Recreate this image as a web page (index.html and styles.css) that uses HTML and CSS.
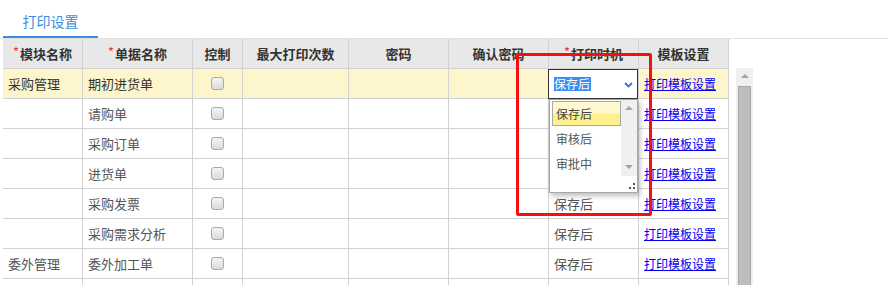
FILE: index.html
```html
<!DOCTYPE html>
<html lang="zh-CN">
<head>
  <meta charset="UTF-8" />
  <title>打印设置</title>
  <link rel="stylesheet" href="styles.css">
</head>
<body>

  <!-- Tabs -->
  <div class="tabs">
    <div class="tab active">打印设置</div>
  </div>

  <div class="content">
    <table class="grid">
      <colgroup>
        <col style="width:80px"><col style="width:110px"><col style="width:50px"><col style="width:106px">
        <col style="width:100px"><col style="width:100px"><col style="width:90px"><col style="width:90px">
      </colgroup>
      <thead>
        <tr>
          <th><span class="req">*</span>模块名称</th>
          <th><span class="req">*</span>单据名称</th>
          <th>控制</th>
          <th>最大打印次数</th>
          <th>密码</th>
          <th>确认密码</th>
          <th><span class="req">*</span>打印时机</th>
          <th>模板设置</th>
        </tr>
      </thead>
      <tbody>
        <tr class="current">
          <td>采购管理</td>
          <td>期初进货单</td>
          <td class="center"><span class="cb"></span></td>
          <td></td><td></td><td></td>
          <td class="editing">
            <div class="select">
              <span class="picked">保存后</span>
              <svg class="chevron" width="9" height="6" viewBox="0 0 9 6"><path d="M1 1 L4.5 4.5 L8 1" fill="none" stroke="#2a78d8" stroke-width="1.8"/></svg>
            </div>
            <div class="dropdown">
              <div class="drop-body">
                <ul class="options">
                  <li class="hover">保存后</li>
                  <li>审核后</li>
                  <li>审批中</li>
                </ul>
                <div class="mini-scroll">
                  <span class="arrow up"></span>
                  <span class="arrow down"></span>
                </div>
              </div>
              <div class="grip">
                <svg width="6" height="6" viewBox="0 0 6 6"><rect x="4" y="0" width="2" height="2" fill="#555"/><rect x="0" y="4" width="2" height="2" fill="#555"/><rect x="4" y="4" width="2" height="2" fill="#555"/></svg>
              </div>
            </div>
          </td>
          <td><a href="#">打印模板设置</a></td>
        </tr>
        <tr>
          <td></td><td>请购单</td><td class="center"><span class="cb"></span></td>
          <td></td><td></td><td></td><td>保存后</td><td><a href="#">打印模板设置</a></td>
        </tr>
        <tr>
          <td></td><td>采购订单</td><td class="center"><span class="cb"></span></td>
          <td></td><td></td><td></td><td>保存后</td><td><a href="#">打印模板设置</a></td>
        </tr>
        <tr>
          <td></td><td>进货单</td><td class="center"><span class="cb"></span></td>
          <td></td><td></td><td></td><td>保存后</td><td><a href="#">打印模板设置</a></td>
        </tr>
        <tr>
          <td></td><td>采购发票</td><td class="center"><span class="cb"></span></td>
          <td></td><td></td><td></td><td>保存后</td><td><a href="#">打印模板设置</a></td>
        </tr>
        <tr>
          <td></td><td>采购需求分析</td><td class="center"><span class="cb"></span></td>
          <td></td><td></td><td></td><td>保存后</td><td><a href="#">打印模板设置</a></td>
        </tr>
        <tr>
          <td>委外管理</td><td>委外加工单</td><td class="center"><span class="cb"></span></td>
          <td></td><td></td><td></td><td>保存后</td><td><a href="#">打印模板设置</a></td>
        </tr>
        <tr>
          <td></td><td></td><td class="center"></td>
          <td></td><td></td><td></td><td></td><td></td>
        </tr>
      </tbody>
    </table>

    <!-- Grid scrollbar -->
    <div class="vscroll">
      <span class="arrow up"></span>
      <div class="thumb"></div>
    </div>
  </div>

  <!-- Annotation box -->
  <div class="mark"></div>

</body>
</html>
```

FILE: styles.css
```css
body {
  margin: 0;
  padding: 0;
  background: #fff;
  color: #555;
  font-family: "Noto Sans CJK SC", "Microsoft YaHei", sans-serif;
  font-size: 13px;
  overflow: hidden;
  position: relative;
  height: 285px;
}

.tabs {
  height: 38px;
  border-bottom: 1px solid #e2e2e2;
  padding-left: 3px;
  display: flex;
}

.tab {
  width: 95px;
  height: 36px;
  line-height: 42px;
  text-align: center;
  font-size: 14px;
  color: #3d8de0;
}

.tab.active {
  border-bottom: 2px solid #3d8de0;
}

.content {
  display: flex;
  align-items: flex-start;
  padding-left: 3px;
}

.grid {
  table-layout: fixed;
  width: 726px;
  border-collapse: separate;
  border-spacing: 0;
}

.grid tr {
  height: 30px;
}

.grid th,
.grid td {
  height: 30px;
  box-sizing: border-box;
  padding: 0 5px;
  line-height: 18px;
  border-right: 1px solid #d2d2d2;
  border-bottom: 1px solid #d2d2d2;
  white-space: nowrap;
  overflow: visible;
  text-align: left;
  vertical-align: middle;
}

.grid th {
  background: #e8e8e8;
  color: #333;
  font-weight: bold;
  text-align: center;
}

.grid td.center {
  text-align: center;
  font-size: 0;
}

.req {
  color: #e33;
  font-weight: normal;
  margin-right: 1px;
  position: relative;
  top: -2px;
}

.grid tr.current td {
  background: #fdf5cc;
  color: #333;
}

.grid a {
  color: #0000ee;
  text-decoration: underline;
  font-size: 12px;
}

.cb {
  display: inline-block;
  width: 11px;
  height: 11px;
  border: 1px solid #a9a9a9;
  border-radius: 3px;
  background: linear-gradient(#f5f5f5, #dadada);
  vertical-align: middle;
}

/* inline editor */
.grid td.editing {
  position: relative;
}

.select {
  position: absolute;
  left: -1px;
  top: 0;
  width: 90px;
  height: 30px;
  box-sizing: border-box;
  border: 1px solid #333;
  background: #fff;
  display: flex;
  align-items: center;
  justify-content: space-between;
  padding: 0 4px 0 5px;
  font-size: 12px;
  z-index: 2;
}

.picked {
  background: #3a8ef0;
  color: #fff;
  line-height: 14px;
  padding: 0 1px 0 0;
}

.chevron {
  margin-top: 2px;
}

.dropdown {
  position: absolute;
  left: 0;
  top: 30px;
  width: 89px;
  height: 94px;
  box-sizing: border-box;
  border: 1px solid #a8a8a8;
  background: #fff;
  box-shadow: 2px 3px 5px rgba(0, 0, 0, 0.25);
  z-index: 3;
  color: #555;
  font-size: 12px;
}

.drop-body {
  display: flex;
}

.options {
  list-style: none;
  margin: 0;
  padding: 1px 0 0 2px;
  flex: 1;
}

.options li {
  height: 25px;
  line-height: 25px;
  padding-left: 4px;
  box-sizing: border-box;
}

.options li.hover {
  border: 1px solid #a8a8a8;
  background: linear-gradient(#fff9d2 0%, #fff9d2 45%, #fff08e 55%, #fff08e 100%);
  line-height: 23px;
  padding-left: 3px;
  color: #444;
}

.mini-scroll {
  width: 16px;
  height: 76px;
  background: #f0f0f0;
  position: relative;
}

.arrow {
  position: absolute;
  left: 50%;
  width: 0;
  height: 0;
  border-left: 4px solid transparent;
  border-right: 4px solid transparent;
  margin-left: -4px;
}

.arrow.up {
  top: 6px;
  border-bottom: 4px solid #a3a3a3;
}

.arrow.down {
  bottom: 7px;
  border-top: 4px solid #a3a3a3;
}

.grip {
  position: absolute;
  right: 2px;
  bottom: 3px;
  line-height: 0;
}

/* grid scrollbar */
.vscroll {
  margin-left: 7px;
  margin-top: 29px;
  width: 17px;
  height: 230px;
  background: #efefef;
  position: relative;
}

.vscroll .thumb {
  position: absolute;
  left: 2px;
  right: 2px;
  top: 18px;
  bottom: 0;
  background: #bdbdbd;
  border: 1px solid #a9a9a9;
  border-bottom: none;
}

/* red annotation */
.mark {
  position: absolute;
  left: 516px;
  top: 53px;
  width: 130px;
  height: 157px;
  border: 3px solid #f21010;
  border-radius: 2px;
  z-index: 5;
}
```
